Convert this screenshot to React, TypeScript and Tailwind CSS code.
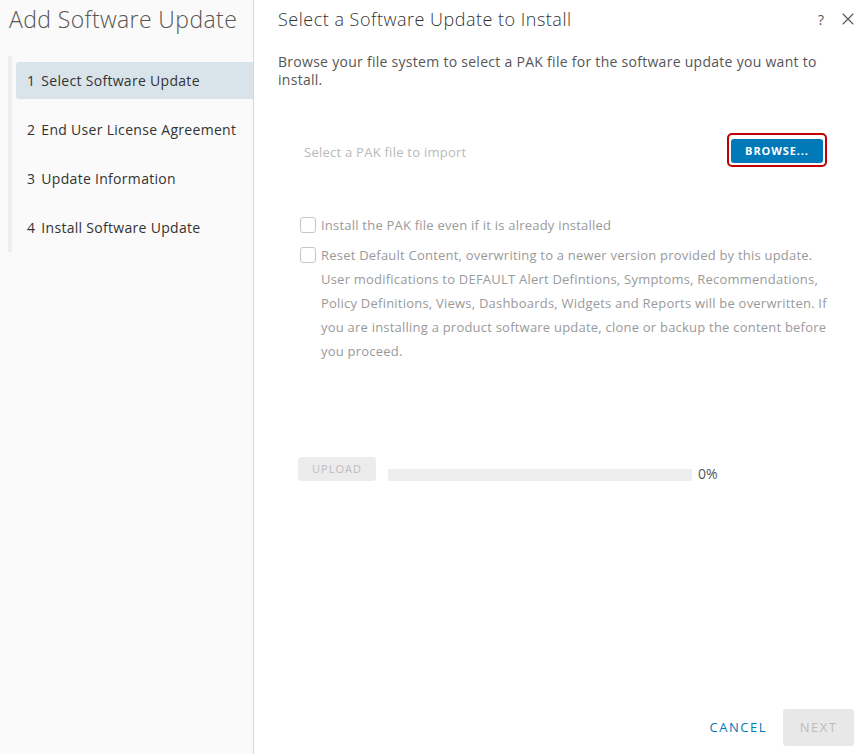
import { X } from 'lucide-react';

export default function App() {
  const steps = ['Select Software Update', 'End User License Agreement', 'Update Information', 'Install Software Update'];

  return (
    <div className="flex h-[754px] w-[866px] bg-white font-['Open_Sans',sans-serif] text-[#565656]">
      {/* left wizard nav */}
      <aside className="w-[254px] shrink-0 border-r border-[#d7d7d7] bg-[#fafafa]">
        <h1 className="pl-[9px] pt-[3px] text-[23px] font-light leading-[32px] tracking-[0.4px] text-[#565656]">
          Add Software Update
        </h1>
        <div className="mt-[21px] ml-[8px] flex flex-col gap-[12px] border-l-[4px] border-[#eeeeee] pt-[6px] pb-[6px] pl-[4px]">
          {steps.map((s, i) => (
            <div
              key={s}
              className={`flex h-[37px] items-center rounded-l-[3px] pl-[11px] text-[14px] tracking-[0.3px] text-[#333] ${
                i === 0 ? 'bg-[#d9e4ea]' : ''
              }`}
            >
              <span className="mr-[6px]">{i + 1}</span>
              {s}
            </div>
          ))}
        </div>
      </aside>

      {/* right content */}
      <main className="relative flex flex-1 flex-col pl-[24px] pr-[8px]">
        <div className="flex h-[38px] items-center justify-between">
          <h2 className="text-[18px] font-light tracking-[0.5px] text-[#333]">Select a Software Update to Install</h2>
          <div className="flex items-center gap-[14px] text-[#555]">
            <span className="text-[14px]">?</span>
            <X className="h-[20px] w-[20px]" strokeWidth={1.3} />
          </div>
        </div>
        <p className="mt-[15px] pr-[28px] text-[14px] leading-[18px] tracking-[0.28px] text-[#565656]">
          Browse your file system to select a PAK file for the software update you want to install.
        </p>

        <div className="mt-[44px] flex items-center justify-between pl-[26px] pr-[31px]">
          <span className="mt-[5px] text-[13px] tracking-[0.25px] text-[#b9b9b9]">Select a PAK file to import</span>
          <div className="rounded-[5px] border-[2px] border-[#c00000] p-[2px]">
            <button className="h-[24px] w-[92px] rounded-[3px] bg-[#0079b8] text-[11px] font-bold tracking-[0.9px] text-white">
              BROWSE...
            </button>
          </div>
        </div>

        <div className="mt-[46px] flex flex-col gap-[6px] pl-[22px] pr-[22px] text-[13px] tracking-[0.22px] text-[#9a9a9a]">
          <label className="flex items-start gap-[5px] leading-[24px]">
            <span className="mt-[4px] h-[16px] w-[16px] shrink-0 rounded-[3px] border border-[#c6c6c6]" />
            Install the PAK file even if it is already installed
          </label>
          <label className="flex items-start gap-[5px] leading-[24px]">
            <span className="mt-[4px] h-[16px] w-[16px] shrink-0 rounded-[3px] border border-[#c6c6c6]" />
            <span>
              Reset Default Content, overwriting to a newer version provided by this update. User modifications to DEFAULT
              Alert Defintions, Symptoms, Recommendations, Policy Definitions, Views, Dashboards, Widgets and Reports will
              be overwritten. If you are installing a product software update, clone or backup the content before you
              proceed.
            </span>
          </label>
        </div>

        <div className="mt-[91px] flex items-center pl-[20px]">
          <button className="h-[24px] w-[78px] rounded-[3px] bg-[#ececec] text-[11px] tracking-[1px] text-[#bdbdbd]">
            UPLOAD
          </button>
          <div className="ml-[12px] mt-[12px] h-[12px] w-[304px] bg-[#eeeeee]" />
          <span className="ml-[6px] mt-[9px] text-[14px] text-[#565656]">0%</span>
        </div>

        <div className="mt-auto mb-[8px] flex items-center justify-end gap-[14px] pr-[4px]">
          <button className="px-[2px] text-[13px] tracking-[1.5px] text-[#0079b8]">CANCEL</button>
          <button className="h-[37px] w-[71px] rounded-[3px] bg-[#e8e8e8] text-[13px] tracking-[1.5px] text-[#bdbdbd]">
            NEXT
          </button>
        </div>
      </main>
    </div>
  );
}
